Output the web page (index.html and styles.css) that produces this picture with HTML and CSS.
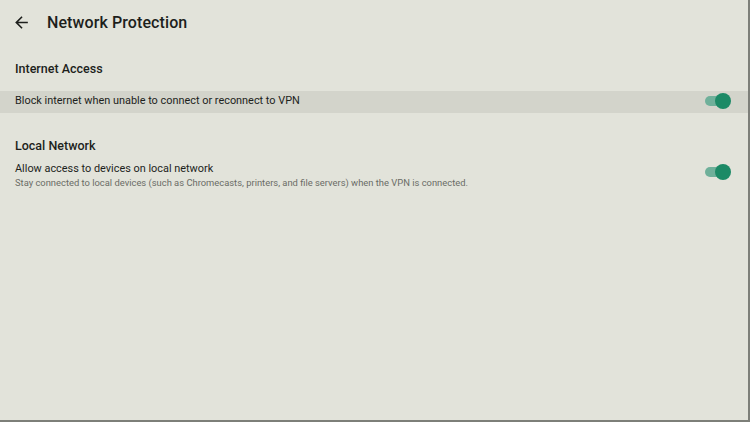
FILE: index.html
```html
<!DOCTYPE html>
<html lang="en">
<head>
    <meta charset="UTF-8">
    <meta name="viewport" content="width=device-width, initial-scale=1.0">
    <title>Network Protection</title>
    <link rel="stylesheet" href="styles.css">
</head>
<body>
    <div class="screen">
        <header class="top-bar">
            <svg class="back" width="19" height="19" viewBox="0 0 24 24">
                <path d="M20 11H7.83l5.59-5.59L12 4l-8 8 8 8 1.41-1.41L7.83 13H20v-2z" fill="#1d1f1c"/>
            </svg>
            <h1>Network Protection</h1>
        </header>

        <section class="group first">
            <h2>Internet Access</h2>
            <div class="row selected">
                <div class="text">
                    <div class="label">Block internet when unable to connect or reconnect to VPN</div>
                </div>
                <span class="switch on"><span class="thumb"></span></span>
            </div>
        </section>

        <section class="group">
            <h2>Local Network</h2>
            <div class="row multi">
                <div class="text">
                    <div class="label">Allow access to devices on local network</div>
                    <div class="hint">Stay connected to local devices (such as Chromecasts, printers, and file servers) when the VPN is connected.</div>
                </div>
                <span class="switch on"><span class="thumb"></span></span>
            </div>
        </section>
    </div>
</body>
</html>
```

FILE: styles.css
```css
html, body {
    margin: 0;
    height: 100%;
}
body {
    font-family: Roboto, "Noto Sans", sans-serif;
    background-color: #e2e3da;
    color: #1d1f1c;
}
.screen {
    height: 420px;
    width: 748px;
    border-right: 2px solid #7d7f79;
    border-bottom: 2px solid #7d7f79;
}
.top-bar {
    display: flex;
    align-items: center;
    height: 44px;
    padding-left: 12px;
}
.back {
    margin-right: 16px;
}
h1 {
    margin: 0;
    font-size: 16px;
    font-weight: 500;
    letter-spacing: 0.1px;
}
.group h2 {
    margin: 0;
    padding: 17px 15px 7px;
    font-size: 12.5px;
    font-weight: 500;
}
.group.first h2 {
    padding-bottom: 15px;
}
.group + .group h2 {
    padding-top: 25px;
}
.row {
    display: flex;
    align-items: center;
    padding: 2px 21px 2px 15px;
    min-height: 18px;
}
.row.selected {
    background-color: #d3d4cb;
    padding-top: 1px;
    padding-bottom: 3px;
}
.row.multi {
    align-items: flex-start;
}
.row.multi .switch {
    margin-top: 5px;
}
.text {
    flex: 1;
}
.label {
    font-size: 10.9px;
    line-height: 14px;
}
.hint {
    font-size: 9.4px;
    line-height: 14px;
    color: #6a6c66;
}
.switch {
    position: relative;
    width: 22px;
    height: 10px;
    border-radius: 5px;
    background-color: #6fb09a;
}
.switch .thumb {
    position: absolute;
    right: -4px;
    top: -3px;
    width: 16px;
    height: 16px;
    border-radius: 50%;
    background-color: #1c8a66;
}
```
